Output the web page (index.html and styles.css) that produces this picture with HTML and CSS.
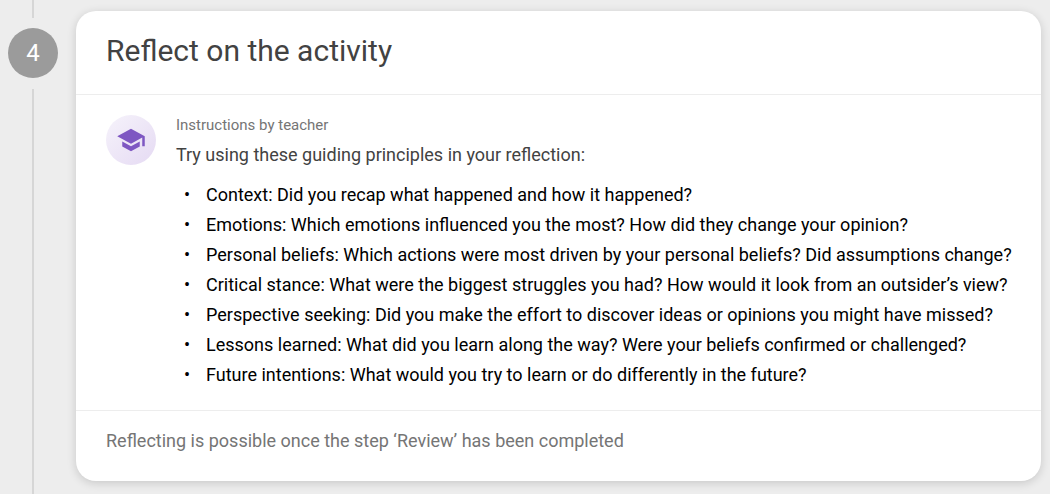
FILE: index.html
```html
<!DOCTYPE html>
<html lang="en">
<head>
  <meta charset="UTF-8">
  <meta name="viewport" content="width=device-width, initial-scale=1.0">
  <title>Reflect on the activity</title>
  <link rel="stylesheet" href="styles.css">
</head>
<body>
  <div class="step">
    <!-- Step number with the timeline -->
    <div class="step-rail">
      <div class="line line-top"></div>
      <div class="step-number">4</div>
      <div class="line line-bottom"></div>
    </div>

    <section class="card">
      <header class="card-header">
        <h1>Reflect on the activity</h1>
      </header>

      <div class="instructions">
        <div class="avatar">
          <svg viewBox="0 0 24 24" aria-hidden="true">
            <path d="M5 13.18v4L12 21l7-3.82v-4L12 17l-7-3.82zM12 3L1 9l11 6 9-4.91V17h2V9L12 3z"/>
          </svg>
        </div>
        <div class="instructions-text">
          <p class="label">Instructions by teacher</p>
          <p class="intro">Try using these guiding principles in your reflection:</p>
          <ul>
            <li>Context: Did you recap what happened and how it happened?</li>
            <li>Emotions: Which emotions influenced you the most? How did they change your opinion?</li>
            <li>Personal beliefs: Which actions were most driven by your personal beliefs? Did assumptions change?</li>
            <li>Critical stance: What were the biggest struggles you had? How would it look from an outsider’s view?</li>
            <li>Perspective seeking: Did you make the effort to discover ideas or opinions you might have missed?</li>
            <li>Lessons learned: What did you learn along the way? Were your beliefs confirmed or challenged?</li>
            <li>Future intentions: What would you try to learn or do differently in the future?</li>
          </ul>
        </div>
      </div>

      <footer class="card-footer">
        <p>Reflecting is possible once the step ‘Review’ has been completed</p>
      </footer>
    </section>
  </div>
</body>
</html>
```

FILE: styles.css
```css
*,
*::before {
  box-sizing: border-box;
}

body {
  margin: 0;
  background-color: #ededed;
  font-family: Roboto, Arial, sans-serif;
  font-size: 18px;
  line-height: 30px;
  color: #424242;
}

h1, p, ul {
  margin: 0;
}

.step {
  display: flex;
  min-height: 100vh;
  padding: 0 9px 0 8px;
}

/* Timeline */
.step-rail {
  display: flex;
  flex-direction: column;
  align-items: center;
  flex: none;
  width: 50px;
}

.line {
  width: 2px;
  background-color: #d6d6d6;
}

.line-top {
  height: 18px;
}

.line-bottom {
  flex: 1;
}

.step-number {
  width: 50px;
  height: 50px;
  margin: 10px 0 11px;
  border-radius: 50%;
  background-color: #9b9b9b;
  color: #fff;
  font-size: 24px;
  line-height: 50px;
  text-align: center;
}

/* Card */
.card {
  flex: 1;
  align-self: flex-start;
  min-width: 0;
  margin: 11px 0 13px 18px;
  border-radius: 20px;
  background-color: #fff;
  box-shadow: 0 2px 10px rgba(0, 0, 0, 0.16);
}

.card-header {
  padding: 20px 30px 23px;
  border-bottom: 1px solid #ededed;
}

.card-header h1 {
  font-size: 30px;
  font-weight: 400;
  line-height: 40px;
}

.instructions {
  display: flex;
  gap: 20px;
  padding: 20px 20px 20px 30px;
}

.avatar {
  display: flex;
  align-items: center;
  justify-content: center;
  flex: none;
  width: 50px;
  height: 50px;
  border-radius: 50%;
  background: linear-gradient(135deg, #f6f3fb, #e5daf3);
}

.avatar svg {
  width: 30px;
  height: 30px;
  fill: #7e57c2;
}

.label {
  margin-bottom: 5px;
  font-size: 15px;
  line-height: 20px;
  color: #757575;
}

.instructions ul {
  margin-top: 10px;
  padding: 0;
  list-style: none;
  color: #000;
}

.instructions li {
  display: flex;
}

.instructions li::before {
  content: "•";
  flex: none;
  width: 30px;
  padding-left: 8px;
}

.card-footer {
  padding: 15px 30px 25px;
  border-top: 1px solid #ededed;
  color: #757575;
}
```
